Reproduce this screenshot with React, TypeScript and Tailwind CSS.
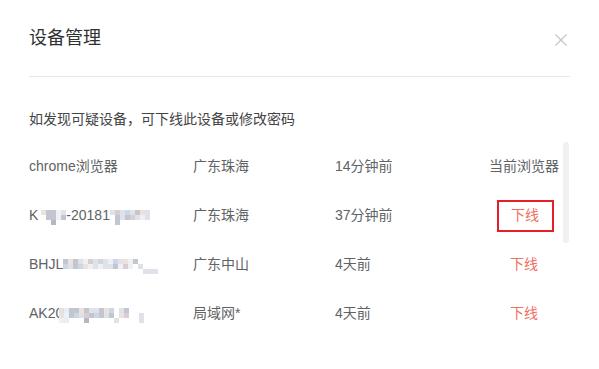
import React from "react";

const C: Record<string, string> = {
  w: "#eef0f4",
  l: "#dfe2e8",
  g: "#c3c6cf",
  d: "#b4b8c2",
  b: "#c9d7e6",
  p: "#ece2da",
  q: "#d9ccd2",
  e: "#e6eef5",
  ".": "transparent",
};

function Mosaic({ cols, className = "" }: { cols: string[]; className?: string }) {
  return (
    <span className={`inline-grid grid-flow-col grid-rows-[repeat(3,5px)] auto-cols-[5px] align-middle translate-y-[2px] bg-transparent ${className}`}>
      {cols.flatMap((col, i) =>
        col.split("").map((ch, j) => (
          <span key={`${i}-${j}`} style={{ backgroundColor: C[ch] }} />
        ))
      )}
    </span>
  );
}

const font = "font-['Liberation_Sans','Noto_Sans_CJK_SC',sans-serif]";

function Row({
  name,
  place,
  time,
  action,
}: {
  name: React.ReactNode;
  place: string;
  time: string;
  action: React.ReactNode;
}) {
  return (
    <div className="flex items-center h-[49px] text-[14px] text-[#606266]">
      <div className="w-[164px] whitespace-nowrap flex items-center">{name}</div>
      <div className="w-[142px]">{place}</div>
      <div className="w-[145px]">{time}</div>
      <div className="w-[88px] flex justify-center">{action}</div>
    </div>
  );
}

export default function App() {
  return (
    <div className={`w-[599px] h-[369px] bg-white ${font}`}>
      <div className="mx-[29px] h-[77px] border-b border-[#e8e8e8] flex items-start justify-between pt-[26px]">
        <div className="text-[18px] leading-[24px] text-[#303133]">设备管理</div>
        <svg width="12" height="12" viewBox="0 0 12 12" className="mt-[8px] mr-[3px]">
          <path d="M0.5 0.5L11.5 11.5M11.5 0.5L0.5 11.5" stroke="#c0c4cc" strokeWidth="1.2" />
        </svg>
      </div>
      <div className="mx-[29px] mt-[32px] text-[14px] leading-[20px] text-[#444444]">
        如发现可疑设备，可下线此设备或修改密码
      </div>
      <div className="relative mx-[29px] mt-[13px] w-[540px]">
        <Row
          name="chrome浏览器"
          place="广东珠海"
          time="14分钟前"
          action={<span>当前浏览器</span>}
        />
        <Row
          name={
            <>
              <span>K</span>
              <span className="ml-[3px]" />
              <Mosaic cols={["p..", "gg.", "ggd", "ww.", "lg."]} />
              <span>-20181</span>
              <Mosaic cols={["l..", "qgg", "ll.", "bg.", "lq.", "gl.", "pw.", "ll."]} />
            </>
          }
          place="广东珠海"
          time="37分钟前"
          action={
            <span className="w-[57px] h-[32px] border-2 border-[#e51f25] flex items-center justify-center text-[#f0705f] -mr-[2px]">
              下线
            </span>
          }
        />
        <Row
          name={
            <>
              <span>BHJL</span>
              <Mosaic
                cols={["gb.", "pl.", "gg.", "lb.", "wp.", "qw.", "ll.", "bw.", "ll.", "wl.", "bg.", "lw.", "pq.", "ww.", "g..", ".l.", "..l", "..l", "..l"]}
              />
            </>
          }
          place="广东中山"
          time="4天前"
          action={<span className="text-[#f0705f]">下线</span>}
        />
        <Row
          name={
            <>
              <span>AK20</span>
              <Mosaic
                className="-ml-[4px] relative"
                cols={["lpw", "ewe", "gg.", "gb.", "pl.", "gqd", "lg.", "lb.", "gg.", "pl.", "bg.", "..l", "lp.", "gq.", "...", "...", ".ll"]}
              />
            </>
          }
          place="局域网*"
          time="4天前"
          action={<span className="text-[#f0705f]">下线</span>}
        />
        <div className="absolute right-0 top-0 w-[6px] h-[101px] rounded-full bg-[#f0f0f0]" />
      </div>
    </div>
  );
}
